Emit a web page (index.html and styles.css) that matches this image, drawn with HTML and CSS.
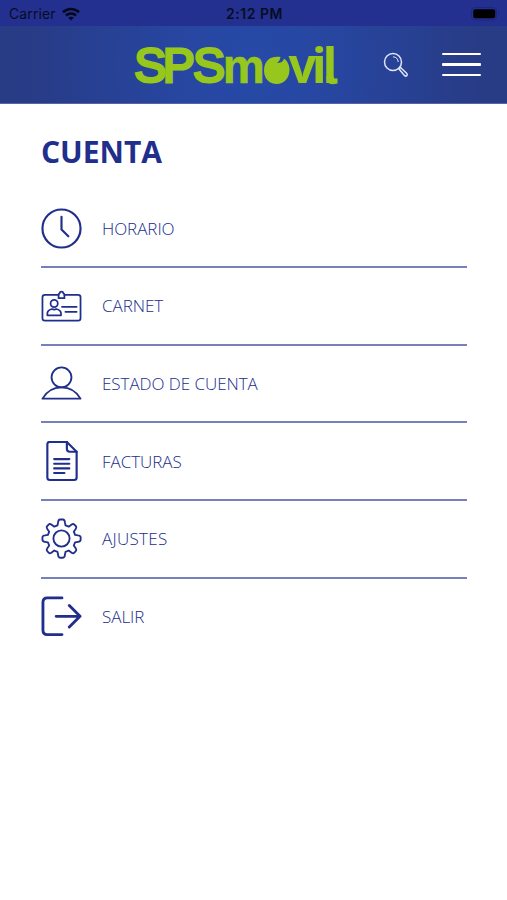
FILE: index.html
```
<!DOCTYPE html>
<html lang="es">
<head>
    <meta charset="UTF-8">
    <meta name="viewport" content="width=device-width, initial-scale=1.0">
    <title>SPSmovil - Cuenta</title>
    <link rel="stylesheet" href="styles.css">
</head>
<body>
    <div class="statusbar">
        <div class="carrier">
            <span>Carrier</span>
            <svg width="18" height="14" viewBox="0 0 18 14" fill="none" stroke="#05081c" stroke-width="2.6">
                <path d="M1 5.2C5.5.9 12.5.9 17 5.2"/>
                <path d="M4 8.500c2.800-2.700 7.200-2.700 10 0"/>
                <path d="M9 13.600L6.200 10.800c1.600-1.400 4-1.400 5.600 0z" fill="#05081c" stroke="none"/>
            </svg>
        </div>
        <span class="time">2:12 PM</span>
        <svg class="battery" width="29" height="14" viewBox="0 0 29 14">
            <rect x=".5" y=".5" width="25" height="12.500" rx="3.500" fill="none" stroke="#1c267a"/>
            <rect x="2.200" y="2.200" width="22" height="9" rx="2" fill="#000"/>
            <path d="M27 4.500q2 2.200 0 4.400z" fill="#1c267a"/>
        </svg>
    </div>

    <header class="topbar">
        <svg class="logo" width="216" height="76" viewBox="0 -16 216 76">
            <text class="logo-sps" x="0.300 28.800 59" y="38.700">SPS</text>
            <text class="logo-m" x="88.800" y="40.300" textLength="42" lengthAdjust="spacingAndGlyphs">m</text>
            <!-- apple used as the o -->
            <path d="M134.500 16.500c2.500-2.200 6.500-3 12-2.500-.3 2.500-1.500 4.500-3.500 6 4 0 6.300-1.500 7-4.500 3.300 2.300 5.500 6.500 5.500 11.300 0 8.500-5.500 14.200-12.800 14.200S130 35.800 130 27.500c0-4.700 1.700-8.700 4.500-11z"/>
            <text class="logo-vil" x="154.500 177.800 188.500" y="40.300">vil</text>
            <path d="M192.500 33h7v1q.3 2.200 4 1.300v5.200q-11 2.500-11-4.500z"/>
        </svg>
        <svg class="search" width="26" height="26" viewBox="0 0 26 26" fill="none" stroke="#dfe5fb" stroke-width="1.500">
            <circle cx="10" cy="10" r="8.500"/>
            <path d="M10 4.800c3 0 5.200 2.200 5.200 5.200" stroke-width="1"/>
            <path d="M15.800 16.800l1.500-1.500 6.500 6.200c1.300 1.600-.6 3.400-2.200 2.200z"/>
        </svg>
        <div class="menu">
            <span></span>
            <span></span>
            <span></span>
        </div>
    </header>

    <main class="content">
        <h1>CUENTA</h1>
        <ul class="options">
            <li>
                <svg viewBox="0 0 42 42" stroke-width="2.200">
                    <circle cx="21" cy="21" r="19.500"/>
                    <path d="M21 9v13l7 7"/>
                </svg>
                <span>HORARIO</span>
            </li>
            <li>
                <svg viewBox="0 0 42 42" stroke-width="1.800">
                    <path d="M18 10H4Q1.500 10 1.500 12.500V34q0 2.500 2.500 2.500h34q2.500 0 2.500-2.500V12.500q0-2.500-2.500-2.500H24"/>
                    <path d="M18 13.500V10q.3-1.300 1.300-1.600c-.3-2.200 3.700-2.200 3.400 0Q23.700 8.700 24 10v3.500z"/>
                    <circle cx="13.500" cy="19" r="3.700"/>
                    <path d="M6.500 31v-2.200q.5-3.300 4.800-4.200 2.200 1.200 4.400 0 4.300.9 4.800 4.200V31z"/>
                    <path d="M21.500 22.300h15M25 27.500h11.500"/>
                </svg>
                <span>CARNET</span>
            </li>
            <li>
                <svg viewBox="0 0 42 42" stroke-width="1.900">
                    <circle cx="21" cy="14.700" r="10.200"/>
                    <path d="M1.500 36.500C6 28.500 13 24.900 21 24.900S36 28.500 40.500 36.500z"/>
                </svg>
                <span>ESTADO DE CUENTA</span>
            </li>
            <li>
                <svg viewBox="0 0 42 42" stroke-width="2.200">
                    <path d="M26.500 1H9Q6.500 1 6.500 3.500v34q0 2.500 2.500 2.500h25q2.500 0 2.500-2.500V11z"/>
                    <path d="M26.500 1V8q0 3 3 3h7"/>
                    <path d="M13.500 18.500H29M13.500 23.300H29M13.500 28.100H29M13.500 32.800h10.500"/>
                </svg>
                <span>FACTURAS</span>
            </li>
            <li>
                <svg viewBox="0 0 42 42" stroke-width="1.900">
                    <circle cx="21" cy="21" r="8.300"/>
                    <path d="M17.500 4.500Q17.700 1.500 19.500 1.500h3q1.800 0 2 3l.6 3 3.300 1.400 3-2.200q1.600-1.100 2.800.1l1.400 1.400q1.200 1.200.1 2.800l-2.100 3 1.300 3.300 3 .5q2.700.3 2.700 2v2.500q0 1.800-2.700 2.100l-3 .5-1.300 3.300 2.100 3q1.100 1.600-.1 2.800l-1.400 1.400q-1.200 1.200-2.800.1l-3-2.200-3.300 1.400-.6 3q-.2 3-2 3h-3q-1.800 0-2-3l-.6-3-3.300-1.400-3 2.200q-1.600 1.100-2.800-.1L6.400 34q-1.200-1.200-.1-2.800l2.100-3-1.300-3.300-3-.5Q1.500 24.100 1.500 22.300v-2.500q0-1.700 2.600-2l3-.5L8.400 14l-2.100-3Q5.200 9.400 6.400 8.200l1.400-1.400Q9 5.600 10.600 6.700l3 2.200 3.300-1.400z"/>
                </svg>
                <span class="wide">AJUSTES</span>
            </li>
            <li>
                <svg viewBox="0 0 42 42" stroke-width="2.900">
                    <path d="M21.500 2H6.500Q2 2 2 6.500v28.500q0 4.500 4.500 4.500h15"/>
                    <path d="M15.500 20.800H40M29 9.800l11 11-11 11"/>
                </svg>
                <span>SALIR</span>
            </li>
        </ul>
    </main>
</body>
</html>
```
FILE: styles.css
```
* {
    box-sizing: border-box;
}

body {
    margin: 0;
    padding: 0;
    background-color: #fff;
    font-family: "Open Sans", sans-serif;
    color: #202e8c;
}

.statusbar {
    display: grid;
    grid-template-columns: 1fr auto 1fr;
    align-items: center;
    height: 26px;
    padding: 1px 7px 0 9px;
    background-color: #23308f;
    color: #080c26;
    font-family: Inter, sans-serif;
    font-size: 14px;
}

.carrier {
    display: flex;
    align-items: center;
    gap: 6px;
    letter-spacing: 0.1px;
}

.time {
    font-weight: 600;
    letter-spacing: 0.5px;
}

.battery {
    justify-self: end;
}

.topbar {
    display: flex;
    align-items: center;
    height: 78px;
    padding: 0 26px 0 134px;
    background: radial-gradient(ellipse 230px 300px at 50% 50%, #264aa8 0%, #2746a0 35%, #283b85 100%);
    border-bottom: 1px solid #5964a5;
}

.logo {
    flex: none;
    fill: #97c71c;
}

.logo-sps {
    font: 48px "Liberation Sans", sans-serif;
    stroke: #97c71c;
    stroke-width: 3px;
}

.logo-m {
    font: bold 48px "Liberation Sans", sans-serif;
    stroke: #97c71c;
    stroke-width: 0.6px;
}

.logo-vil {
    font: bold 49px "Open Sans", sans-serif;
}

.search {
    margin-left: 33px;
}

.menu {
    display: flex;
    flex-direction: column;
    gap: 8px;
    width: 39px;
    margin-left: auto;
}

.menu span {
    height: 2.4px;
    border-radius: 1px;
    background-color: #fff;
}

.content {
    padding: 28px 40px 0 41px;
}

h1 {
    margin: 0;
    font-size: 30px;
    line-height: 40px;
    font-weight: 700;
}

.options {
    list-style: none;
    margin: 18.2px 0 0;
    padding: 0;
}

.options li {
    display: flex;
    align-items: center;
    gap: 20px;
    height: 77.7px;
    border-bottom: 2px solid #7780bd;
    font-size: 17px;
    font-weight: 300;
    letter-spacing: -0.05px;
}

.options li:last-child {
    border-bottom: none;
    height: 76px;
}

.options svg {
    width: 41px;
    height: 41px;
    fill: none;
    stroke: #202e8c;
    stroke-linecap: round;
    stroke-linejoin: round;
}

.options .wide {
    letter-spacing: 0.3px;
}
```
